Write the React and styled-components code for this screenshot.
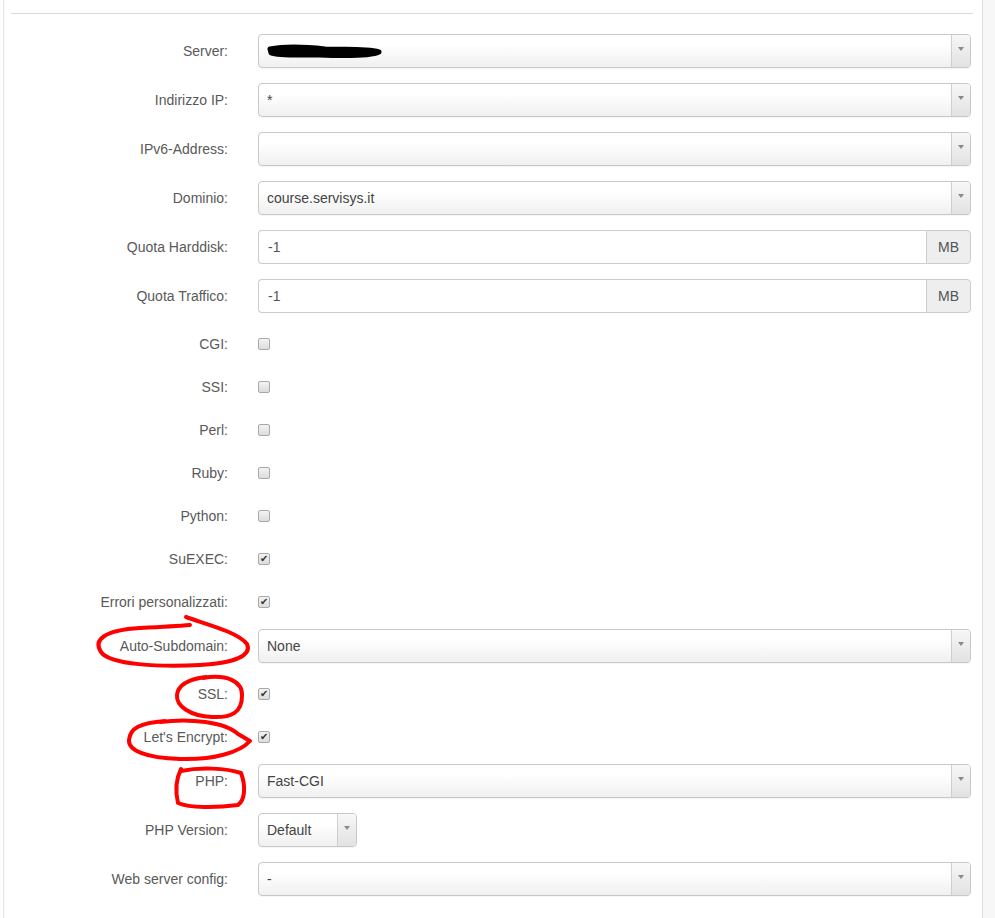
import React from 'react';
import styled, { createGlobalStyle } from 'styled-components';

const GlobalStyle = createGlobalStyle`
  body {
    margin: 0;
    background: #fff;
    font-family: "Liberation Sans", Arial, Helvetica, sans-serif;
    font-size: 14px;
    color: #555;
  }
`;

const Page = styled.div`
  position: relative;
  display: flex;
  min-height: 918px;
  overflow: hidden;
`;

const Panel = styled.div`
  box-sizing: border-box;
  margin-left: 3px;
  width: 980px;
  flex: none;
  border-left: 1px solid #e3e3e3;
  border-right: 1px solid #dcdcdc;
  padding: 13px 9px 0 7px;
`;

const Side = styled.div`
  flex: 1;
  background: #f7f7f7;
`;

const Rule = styled.hr`
  margin: 0 0 20px;
  border: 0;
  border-top: 1px solid #d8d8d8;
`;

const Row = styled.div`
  display: grid;
  grid-template-columns: 232px 1fr;
  column-gap: 15px;
  align-items: center;
  margin-bottom: 15px;
  padding-right: 2px;
  min-height: ${(p) => (p.$check ? '24px' : '34px')};
  padding-top: ${(p) => (p.$check ? '4px' : '0')};
`;

const Label = styled.label`
  text-align: right;
  padding-right: 15px;
  color: #595959;
  white-space: nowrap;
`;

const Select = styled.div`
  position: relative;
  display: flex;
  align-items: center;
  height: 34px;
  box-sizing: border-box;
  width: ${(p) => (p.$width ? p.$width + 'px' : 'auto')};
  border: 1px solid #c8c8c8;
  border-radius: 4px;
  background: linear-gradient(#ffffff 30%, #f0f0f0 100%);
  box-shadow: 0 1px 1px rgba(0, 0, 0, 0.04);
  color: #444;
  padding-left: 8px;
  overflow: hidden;
`;

const Value = styled.span`
  flex: 1;
  white-space: nowrap;
  display: flex;
  align-items: center;
`;

const Arrow = styled.span`
  width: 19px;
  align-self: stretch;
  border-left: 1px solid #cfcfcf;
  background: linear-gradient(#f7f7f7, #e2e2e2);
  display: flex;
  justify-content: center;
  padding-top: 12px;
  box-sizing: border-box;

  &::after {
    content: '';
    width: 0;
    height: 0;
    border-left: 3px solid transparent;
    border-right: 3px solid transparent;
    border-top: 4px solid #8a8a8a;
  }
`;

const InputGroup = styled.div`
  display: flex;
  height: 34px;
`;

const Input = styled.div`
  flex: 1;
  box-sizing: border-box;
  display: flex;
  align-items: center;
  padding-left: 9px;
  border: 1px solid #cccccc;
  border-right: 0;
  border-radius: 4px 0 0 4px;
  background: #fff;
  color: #555;
`;

const Addon = styled.span`
  width: 45px;
  box-sizing: border-box;
  display: flex;
  align-items: center;
  justify-content: center;
  border: 1px solid #cccccc;
  border-radius: 0 4px 4px 0;
  background: #eeeeee;
  color: #555;
`;

const Check = styled.span`
  width: 12px;
  height: 12px;
  box-sizing: border-box;
  border: 1px solid #a9a9a9;
  border-radius: 2px;
  background: linear-gradient(#f3f3f3, #dcdcdc);
  display: flex;
  align-items: center;
  justify-content: center;
  color: #333;
  font-size: 10px;
  line-height: 1;
`;

const Annotation = styled.svg`
  position: absolute;
  left: 0;
  top: 0;
  width: 995px;
  height: 918px;
  pointer-events: none;
`;

function SelectBox({ value, width, children }) {
  return (
    <Select $width={width}>
      <Value>{children || value}</Value>
      <Arrow />
    </Select>
  );
}

function SizeInput({ value }) {
  return (
    <InputGroup>
      <Input>{value}</Input>
      <Addon>MB</Addon>
    </InputGroup>
  );
}

function Checkbox({ checked }) {
  return <Check>{checked ? '✔' : ''}</Check>;
}

const checks = [
  ['CGI:', false],
  ['SSI:', false],
  ['Perl:', false],
  ['Ruby:', false],
  ['Python:', false],
  ['SuEXEC:', true],
  ['Errori personalizzati:', true],
];

export default function App() {
  return (
    <Page>
      <GlobalStyle />
      <Panel>
        <Rule />
        <Row>
          <Label>Server:</Label>
          <SelectBox>
            {/* redaction scribble */}
            <svg width='116' height='18' viewBox='0 0 116 18'>
              <path
                d='M3 7 C18 4 40 5 58 7 C78 8 98 6 112 10 C104 14 76 14 52 13 C32 13 12 14 4 11 Z'
                fill='#000'
                stroke='#000'
                strokeWidth='5'
                strokeLinejoin='round'
              />
            </svg>
          </SelectBox>
        </Row>
        <Row>
          <Label>Indirizzo IP:</Label>
          <SelectBox value='*' />
        </Row>
        <Row>
          <Label>IPv6-Address:</Label>
          <SelectBox value='' />
        </Row>
        <Row>
          <Label>Dominio:</Label>
          <SelectBox value='course.servisys.it' />
        </Row>
        <Row>
          <Label>Quota Harddisk:</Label>
          <SizeInput value='-1' />
        </Row>
        <Row>
          <Label>Quota Traffico:</Label>
          <SizeInput value='-1' />
        </Row>
        {checks.map(([label, on]) => (
          <Row $check key={label}>
            <Label>{label}</Label>
            <Checkbox checked={on} />
          </Row>
        ))}
        <Row>
          <Label>Auto-Subdomain:</Label>
          <SelectBox value='None' />
        </Row>
        <Row $check>
          <Label>SSL:</Label>
          <Checkbox checked />
        </Row>
        <Row $check>
          <Label>Let's Encrypt:</Label>
          <Checkbox checked />
        </Row>
        <Row>
          <Label>PHP:</Label>
          <SelectBox value='Fast-CGI' />
        </Row>
        <Row>
          <Label>PHP Version:</Label>
          <SelectBox value='Default' width={99} />
        </Row>
        <Row>
          <Label>Web server config:</Label>
          <SelectBox value='-' />
        </Row>
      </Panel>
      <Side />
      {/* red hand-drawn marks over the labels */}
      <Annotation viewBox='0 0 995 918'>
        <g fill='none' stroke='#f00' strokeWidth='4' strokeLinecap='round' strokeLinejoin='round'>
          <path d='M186 617 C205 624 238 632 247 644 C252 655 236 663 200 665 C160 667 110 665 101 652 C93 640 104 630 140 628 C160 627 178 626 190 625' />
          <path d='M203 678 C226 674 243 681 242 696 C242 712 232 718 212 717 C190 716 176 706 177 695 C178 684 190 679 206 677' />
          <path d='M160 722 C190 718 225 722 238 734 L250 741 C240 752 215 760 180 759 C145 758 128 750 129 740 C130 728 140 723 165 721' />
          <path d='M181 771 C200 767 226 768 241 773 C246 786 245 800 238 805 C215 808 190 808 178 803 C175 790 176 779 181 769' />
        </g>
      </Annotation>
    </Page>
  );
}
